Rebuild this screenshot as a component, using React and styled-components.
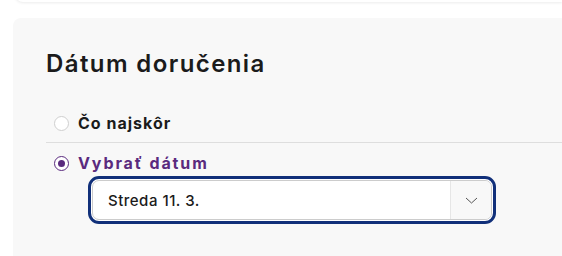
import React from 'react'
import styled, { createGlobalStyle } from 'styled-components'

const GlobalStyle = createGlobalStyle`
  * { box-sizing: border-box; }
  body {
    margin: 0;
    background: #ffffff;
    font-family: Inter, "Noto Sans", sans-serif;
    overflow: hidden;
  }
`

const Page = styled.div`
  width: 562px;
  height: 256px;
  overflow: hidden;
`

const TopCard = styled.div`
  height: 42px;
  margin: -40px 0 0 15px;
  background: #ffffff;
  border-radius: 0 0 0 8px;
  box-shadow: 0 1px 3px rgba(0, 0, 0, 0.08);
`

const Panel = styled.section`
  margin: 16px 0 0 13px;
  height: 260px;
  background: #f8f8f8;
  border-radius: 8px 0 0 0;
  padding: 31px 0 0 33px;
`

const Title = styled.h2`
  margin: 0;
  height: 29px;
  line-height: 29px;
  font-size: 24px;
  font-weight: 600;
  letter-spacing: 1.4px;
  color: #1b1b1b;
`

const Option = styled.label`
  display: flex;
  align-items: center;
  gap: 9px;
  height: 20px;
  margin-top: ${(p) => p.top || 0}px;
  padding-left: 8px;
  font-size: 16px;
  font-weight: 700;
  letter-spacing: ${(p) => (p.checked ? '1.9px' : '1px')};
  color: ${(p) => (p.checked ? '#5a2a7e' : '#1b1b1b')};
`

const Radio = styled.span`
  width: 15px;
  height: 15px;
  border-radius: 50%;
  background: #ffffff;
  border: 1.5px solid ${(p) => (p.checked ? '#5a2a7e' : '#cfcfcf')};
  display: flex;
  align-items: center;
  justify-content: center;
  &::after {
    content: '';
    width: 7px;
    height: 7px;
    border-radius: 50%;
    background: ${(p) => (p.checked ? '#5a2a7e' : 'transparent')};
  }
`

const Divider = styled.hr`
  margin: 9px 0 10px;
  border: 0;
  border-top: 1px solid #dedede;
`

const SelectRing = styled.div`
  margin: 3px 0 0 42px;
  width: 408px;
  height: 48px;
  padding: 1px;
  border: 3px solid #11307a;
  border-radius: 11px;
  background: #ffffff;
`

const Select = styled.div`
  display: flex;
  height: 100%;
  border: 1px solid #cccccc;
  border-radius: 7px;
  overflow: hidden;
  background: #ffffff;
`

const Value = styled.div`
  flex: 1;
  display: flex;
  align-items: center;
  padding-left: 15px;
  font-size: 15px;
  font-weight: 500;
  letter-spacing: 0.5px;
  color: #1b1b1b;
`

const Arrow = styled.div`
  width: 41px;
  display: flex;
  align-items: center;
  justify-content: center;
  background: #f8f8f8;
  border-left: 1px solid #e6e6e6;
`

const App = () => {
  return (
    <Page>
      <GlobalStyle />
      <TopCard />
      <Panel>
        <Title>Dátum doručenia</Title>
        <Option top={35}>
          <Radio />
          Čo najskôr
        </Option>
        <Divider />
        <Option checked>
          <Radio checked />
          Vybrať dátum
        </Option>
        <SelectRing>
          <Select>
            <Value>Streda 11. 3.</Value>
            <Arrow>
              <svg width="13" height="7" viewBox="0 0 13 7" fill="none">
                <path d="M1 1l5.5 5 5.5-5" stroke="#555" strokeWidth="1" />
              </svg>
            </Arrow>
          </Select>
        </SelectRing>
      </Panel>
    </Page>
  )
}

export default App
